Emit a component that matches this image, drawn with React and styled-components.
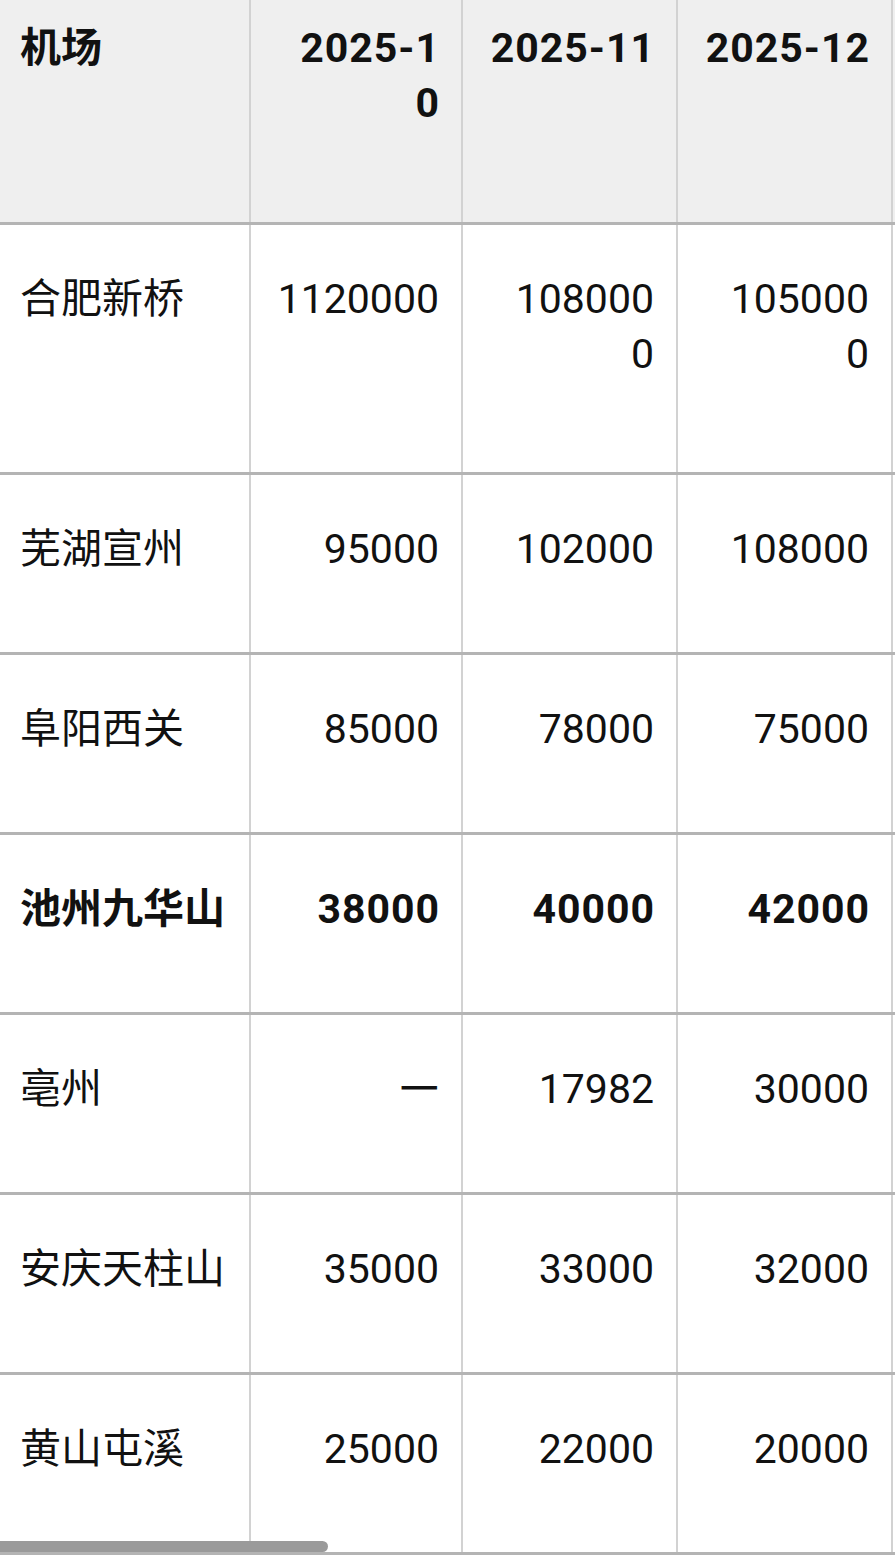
import React from 'react';
import styled, { createGlobalStyle } from 'styled-components';

const GlobalStyle = createGlobalStyle`
  html, body {
    margin: 0;
    padding: 0;
    background: #ffffff;
  }
  body {
    font-family: Roboto, "Noto Sans CJK SC", sans-serif;
    color: #111;
  }
`;

// months shown in the header, lines split the way the narrow cells wrap them
const months = [['2025-1', '0'], ['2025-11'], ['2025-12']];

const rows = [
  { name: '合肥新桥', height: 250, values: [['1120000'], ['108000', '0'], ['105000', '0']] },
  { name: '芜湖宣州', height: 180, values: [['95000'], ['102000'], ['108000']] },
  { name: '阜阳西关', height: 180, values: [['85000'], ['78000'], ['75000']] },
  { name: '池州九华山', height: 180, bold: true, values: [['38000'], ['40000'], ['42000']] },
  { name: '亳州', height: 180, values: [[null], ['17982'], ['30000']] },
  { name: '安庆天柱山', height: 180, values: [['35000'], ['33000'], ['32000']] },
  { name: '黄山屯溪', height: 180, values: [['25000'], ['22000'], ['20000']] },
];

// null = no data for that month
const Lines = ({ lines }) =>
  lines.map((line, i) => (
    <React.Fragment key={i}>
      {i > 0 && <br />}
      {line === null ? <Dash>—</Dash> : line}
    </React.Fragment>
  ));

const App = () => {
  return (
    <>
      <GlobalStyle />
      <Viewport>
        <Table>
          <Row $height={225} $head>
            <Cell $head $bold>机场</Cell>
            {months.map((m, i) => (
              <Cell key={i} $head $bold $num>
                <Lines lines={m} />
              </Cell>
            ))}
            <Cell $head />
          </Row>
          {rows.map((r) => (
            <Row key={r.name} $height={r.height}>
              <Cell $bold={r.bold}>{r.name}</Cell>
              {r.values.map((v, i) => (
                <Cell key={i} $num $bold={r.bold}>
                  <Lines lines={v} />
                </Cell>
              ))}
              <Cell />
            </Row>
          ))}
        </Table>
        <ScrollThumb />
      </Viewport>
    </>
  );
};

const Viewport = styled.div`
  position: relative;
  width: 895px;
  height: 1558px;
  overflow: hidden;
  background: #fff;
`;

const Table = styled.div`
  display: flex;
  flex-direction: column;
  width: max-content;
`;

const Row = styled.div`
  box-sizing: border-box;
  display: grid;
  grid-template-columns: 251px 212px 215px 215px 215px;
  height: ${(p) => p.$height}px;
  background: ${(p) => (p.$head ? '#efefef' : '#ffffff')};
  border-bottom: 3px solid #b4b4b4;
`;

const Cell = styled.div`
  box-sizing: border-box;
  border-right: 2px solid #d2d2d2;
  padding: ${(p) => (p.$head ? '21px' : '47px')}
    ${(p) => (p.$bold && p.$num ? '21px' : '22px')} 0 20px;
  font-size: 41px;
  line-height: 55px;
  font-weight: ${(p) => (p.$bold ? 700 : 400)};
  letter-spacing: ${(p) => (p.$bold && p.$num ? '1px' : '0')};
  text-align: ${(p) => (p.$num ? 'right' : 'left')};
  white-space: nowrap;
  color: #111;
`;

const Dash = styled.span`
  display: inline-block;
  font-family: "Noto Sans CJK SC", sans-serif;
  font-size: 44px;
  font-weight: 500;
  transform: translateY(-8px);
`;

const ScrollThumb = styled.div`
  position: absolute;
  left: 0;
  top: 1541px;
  width: 328px;
  height: 11px;
  background: #9a9a9a;
  border-radius: 0 6px 6px 0;
`;

export default App;
